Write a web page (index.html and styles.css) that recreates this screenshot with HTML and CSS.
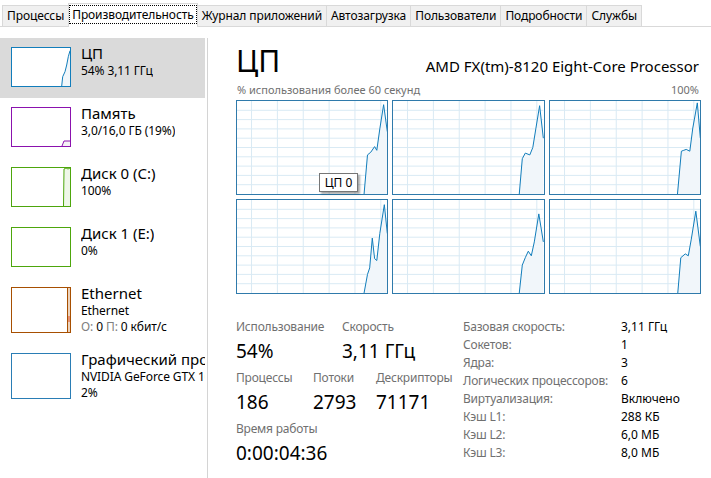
FILE: index.html
```html
<!DOCTYPE html>
<html lang="ru">
<head>
  <meta charset="UTF-8">
  <title>Диспетчер задач</title>
  <link rel="stylesheet" href="styles.css">
</head>
<body>
  <div class="tabs">
    <div class="tab">Процессы</div>
    <div class="tab active"><span class="focus">Производительность</span></div>
    <div class="tab">Журнал приложений</div>
    <div class="tab">Автозагрузка</div>
    <div class="tab">Пользователи</div>
    <div class="tab">Подробности</div>
    <div class="tab">Службы</div>
  </div>

  <div class="main">
    <div class="sidebar">
      <div class="item selected">
        <div class="thumb cpu">
          <svg viewBox="0 0 58 38" preserveAspectRatio="none">
            <polygon points="49.7,38 50.7,28.7 53,23.7 54.7,17 56.3,8.7 58,2.7 58,38" fill="#f1f6fa"/>
            <polyline points="49.7,38 50.7,28.7 53,23.7 54.7,17 56.3,8.7 58,2.7" fill="none" stroke="#117dbb" stroke-width="1"/>
          </svg>
        </div>
        <div class="item-text">
          <div class="item-title">ЦП</div>
          <div class="item-sub">54% 3,11 ГГц</div>
        </div>
      </div>
      <div class="item">
        <div class="thumb mem">
          <svg viewBox="0 0 58 38" preserveAspectRatio="none">
            <polygon points="50,38 52,33 58,33 58,38" fill="#f4f2f4"/>
            <polyline points="50,38 52,33 58,33" fill="none" stroke="#8b12ae" stroke-width="1"/>
          </svg>
        </div>
        <div class="item-text">
          <div class="item-title">Память</div>
          <div class="item-sub">3,0/16,0 ГБ (19%)</div>
        </div>
      </div>
      <div class="item">
        <div class="thumb disk">
          <svg viewBox="0 0 58 38" preserveAspectRatio="none">
            <polygon points="51.5,38 52,1 54,0 56,1 58,0 58,38" fill="#eff7e9"/>
            <polyline points="51.5,38 52,1 54,0 56,1 58,0" fill="none" stroke="#4da60c" stroke-width="1"/>
          </svg>
        </div>
        <div class="item-text">
          <div class="item-title">Диск 0 (C:)</div>
          <div class="item-sub">100%</div>
        </div>
      </div>
      <div class="item">
        <div class="thumb disk"></div>
        <div class="item-text">
          <div class="item-title">Диск 1 (E:)</div>
          <div class="item-sub">0%</div>
        </div>
      </div>
      <div class="item tall">
        <div class="thumb net">
          <svg viewBox="0 0 58 44" preserveAspectRatio="none">
            <line x1="55.5" y1="0" x2="55.5" y2="44" stroke="#a74f01" stroke-width="1"/>
            <line x1="57" y1="0" x2="57" y2="44" stroke="#d9a77a" stroke-width="1"/>
            <line x1="57" y1="28" x2="57" y2="34" stroke="#e0502a" stroke-width="1"/>
          </svg>
        </div>
        <div class="item-text">
          <div class="item-title">Ethernet</div>
          <div class="item-sub">Ethernet</div>
          <div class="item-sub"><span class="dim">О:</span> 0 <span class="dim">П:</span> 0 кбит/с</div>
        </div>
      </div>
      <div class="item tall">
        <div class="thumb gpu"></div>
        <div class="item-text">
          <div class="item-title">Графический процессор 0</div>
          <div class="item-sub">NVIDIA GeForce GTX 1050 Ti</div>
          <div class="item-sub">2%</div>
        </div>
      </div>
    </div>

    <div class="panel">
      <div class="panel-head">
        <div class="panel-title">ЦП</div>
        <div class="panel-model">AMD FX(tm)-8120 Eight-Core Processor</div>
      </div>
      <div class="caption">
        <span>% использования более 60 секунд</span>
        <span>100%</span>
      </div>
      <div class="graphs" id="graphs"></div>

      <div class="stats">
        <div class="stats-left">
          <div class="stat-row">
            <div class="stat w106">
              <div class="stat-label">Использование</div>
              <div class="stat-value">54%</div>
            </div>
            <div class="stat">
              <div class="stat-label">Скорость</div>
              <div class="stat-value">3,11 ГГц</div>
            </div>
          </div>
          <div class="stat-row">
            <div class="stat w77">
              <div class="stat-label">Процессы</div>
              <div class="stat-value">186</div>
            </div>
            <div class="stat w63">
              <div class="stat-label">Потоки</div>
              <div class="stat-value">2793</div>
            </div>
            <div class="stat">
              <div class="stat-label">Дескрипторы</div>
              <div class="stat-value">71171</div>
            </div>
          </div>
          <div class="stat-row">
            <div class="stat">
              <div class="stat-label">Время работы</div>
              <div class="stat-value">0:00:04:36</div>
            </div>
          </div>
        </div>

        <div class="specs">
          <span class="spec-name">Базовая скорость:</span><span>3,11 ГГц</span>
          <span class="spec-name">Сокетов:</span><span>1</span>
          <span class="spec-name">Ядра:</span><span>3</span>
          <span class="spec-name">Логических процессоров:</span><span>6</span>
          <span class="spec-name">Виртуализация:</span><span>Включено</span>
          <span class="spec-name">Кэш L1:</span><span>288 КБ</span>
          <span class="spec-name">Кэш L2:</span><span>6,0 МБ</span>
          <span class="spec-name">Кэш L3:</span><span>8,0 МБ</span>
        </div>
      </div>

      <div class="tooltip">ЦП 0</div>
    </div>
  </div>

  <script>
    // usage history per logical processor: [x, y] as fractions of the box
    const history = [
      [[0.845,1],[0.868,0.58],[0.89,0.55],[0.915,0.49],[0.93,0.53],[0.95,0.30],[0.975,0.04],[1,0.33]],
      [[0.84,1],[0.86,0.62],[0.88,0.56],[0.91,0.58],[0.93,0.50],[0.95,0.30],[0.975,0.05],[1,0.40]],
      [[0.848,1],[0.874,0.54],[0.89,0.53],[0.906,0.52],[0.93,0.54],[0.95,0.29],[0.98,0.02],[1,0.40]],
      [[0.845,1],[0.868,0.80],[0.883,0.73],[0.90,0.41],[0.915,0.63],[0.93,0.65],[0.95,0.36],[0.98,0.05],[1,0.36]],
      [[0.84,1],[0.86,0.70],[0.88,0.62],[0.90,0.55],[0.92,0.60],[0.94,0.45],[0.97,0.15],[1,0.45]],
      [[0.85,1],[0.87,0.62],[0.90,0.58],[0.92,0.60],[0.94,0.42],[0.97,0.12],[1,0.50]]
    ];

    function buildGraph(points) {
      const w = 150, h = 93;
      let svg = `<svg viewBox="0 0 ${w} ${h}" preserveAspectRatio="none">`;
      for (let i = 1; i < 10; i++) {
        const y = (h * i / 10).toFixed(1);
        svg += `<line x1="0" y1="${y}" x2="${w}" y2="${y}" class="grid"/>`;
      }
      for (let x = 14.5; x < w; x += 25.8) {
        svg += `<line x1="${x.toFixed(1)}" y1="0" x2="${x.toFixed(1)}" y2="${h}" class="grid"/>`;
      }
      const pts = points.map(([px, py]) => `${(px * w).toFixed(1)},${(py * h).toFixed(1)}`).join(" ");
      svg += `<polygon points="${pts} ${w},${h}" class="area"/>`;
      svg += `<polyline points="${pts}" class="line"/>`;
      svg += "</svg>";
      return svg;
    }

    const graphs = document.getElementById("graphs");
    for (const points of history) {
      const box = document.createElement("div");
      box.className = "graph";
      box.innerHTML = buildGraph(points);
      graphs.appendChild(box);
    }
  </script>
</body>
</html>
```

FILE: styles.css
```css
body {
  margin: 0;
  width: 711px;
  height: 478px;
  overflow: hidden;
  background: #fff;
  color: #000;
  font-family: "Noto Sans", sans-serif;
  font-size: 12px;
}

/* tab strip */
.tabs {
  display: flex;
  height: 21px;
  padding: 5px 0 0 2px;
  border-bottom: 1px solid #d9d9d9;
}
.tab {
  height: 20px;
  line-height: 19px;
  padding: 0 4px;
  margin-right: -1px;
  background: #f0f0f0;
  border: 1px solid #d9d9d9;
  border-bottom: none;
  white-space: nowrap;
  letter-spacing: -0.1px;
}
.tab.active {
  position: relative;
  height: 23px;
  margin-top: -2px;
  padding: 0 1px;
  background: #fff;
  line-height: 21px;
}
.focus {
  display: inline-block;
  line-height: 17px;
  padding: 0 2px;
  outline: 1px dotted #000;
  outline-offset: 0;
}

.main {
  display: flex;
  height: 440px;
  padding-top: 11px;
}

/* left list */
.sidebar {
  width: 207px;
  flex: none;
  border-right: 1px solid #d4d4d4;
}
.item {
  display: flex;
  height: 55px;
  padding: 5px 0 0 11px;
  margin-right: 2px;
  overflow: hidden;
}
.item.tall {
  height: 61px;
}
.item.selected {
  background: #dadada;
}
.thumb {
  width: 60px;
  height: 40px;
  margin-top: 4px;
  flex: none;
  box-sizing: border-box;
  border: 1px solid #117dbb;
  background: #fff;
}
.item.tall .thumb {
  height: 46px;
}
.thumb svg {
  display: block;
  width: 100%;
  height: 100%;
}
.thumb.mem { border-color: #8b12ae; }
.thumb.disk { border-color: #4da60c; }
.thumb.net { border-color: #a74f01; }
.thumb.gpu { border-color: #2a7db5; }

.item-text {
  margin-left: 10px;
  white-space: nowrap;
  overflow: hidden;
}
.item-title {
  font-size: 15px;
  line-height: 20px;
}
.item-sub {
  font-size: 12px;
  line-height: 16px;
  letter-spacing: -0.1px;
}
.dim {
  color: #808080;
}

/* right panel */
.panel {
  flex: 1;
  position: relative;
  padding: 0 10px 0 28px;
}
.panel-head {
  display: flex;
  justify-content: space-between;
  align-items: baseline;
  margin-top: 5px;
}
.panel-title {
  font-size: 30px;
  line-height: 36px;
}
.panel-model {
  font-size: 15px;
  padding-right: 2px;
}
.caption {
  display: flex;
  justify-content: space-between;
  margin-top: 4px;
  font-size: 11px;
  line-height: 14px;
  color: #707070;
  padding: 0 2px 0 1px;
}
.graphs {
  display: grid;
  grid-template-columns: repeat(3, 1fr);
  grid-auto-rows: 95px;
  gap: 4px;
  margin-top: 3px;
}
.graph {
  border: 1px solid #2f7aab;
}
.graph svg {
  display: block;
  width: 100%;
  height: 100%;
}
.graph .grid {
  stroke: #d9eaf4;
  stroke-width: 1;
  vector-effect: non-scaling-stroke;
}
.graph .area {
  fill: #f1f6fa;
}
.graph .line {
  fill: none;
  stroke: #117dbb;
  stroke-width: 1;
  vector-effect: non-scaling-stroke;
}

/* numbers under the graphs */
.stats {
  display: flex;
  margin-top: 24px;
}
.stats-left {
  width: 227px;
  flex: none;
}
.stat-row {
  display: flex;
  margin-bottom: 3px;
}
.stat.w106 { width: 106px; }
.stat.w77 { width: 77px; }
.stat.w63 { width: 63px; }
.stat-label {
  font-size: 12px;
  line-height: 18px;
  letter-spacing: -0.2px;
  color: #707070;
}
.stat-value {
  font-size: 19px;
  line-height: 30px;
}

.specs {
  display: grid;
  grid-template-columns: 158px auto;
  grid-auto-rows: 18px;
  align-items: center;
  font-size: 12px;
  line-height: 18px;
  white-space: nowrap;
}
.spec-name {
  color: #707070;
  letter-spacing: -0.2px;
}

.tooltip {
  position: absolute;
  left: 111px;
  top: 135px;
  width: 39px;
  height: 19px;
  box-sizing: border-box;
  border: 1px solid #767676;
  background: #fff;
  font-size: 12px;
  line-height: 17px;
  text-align: center;
  box-shadow: 2px 2px 2px rgba(0, 0, 0, 0.35);
}
```
